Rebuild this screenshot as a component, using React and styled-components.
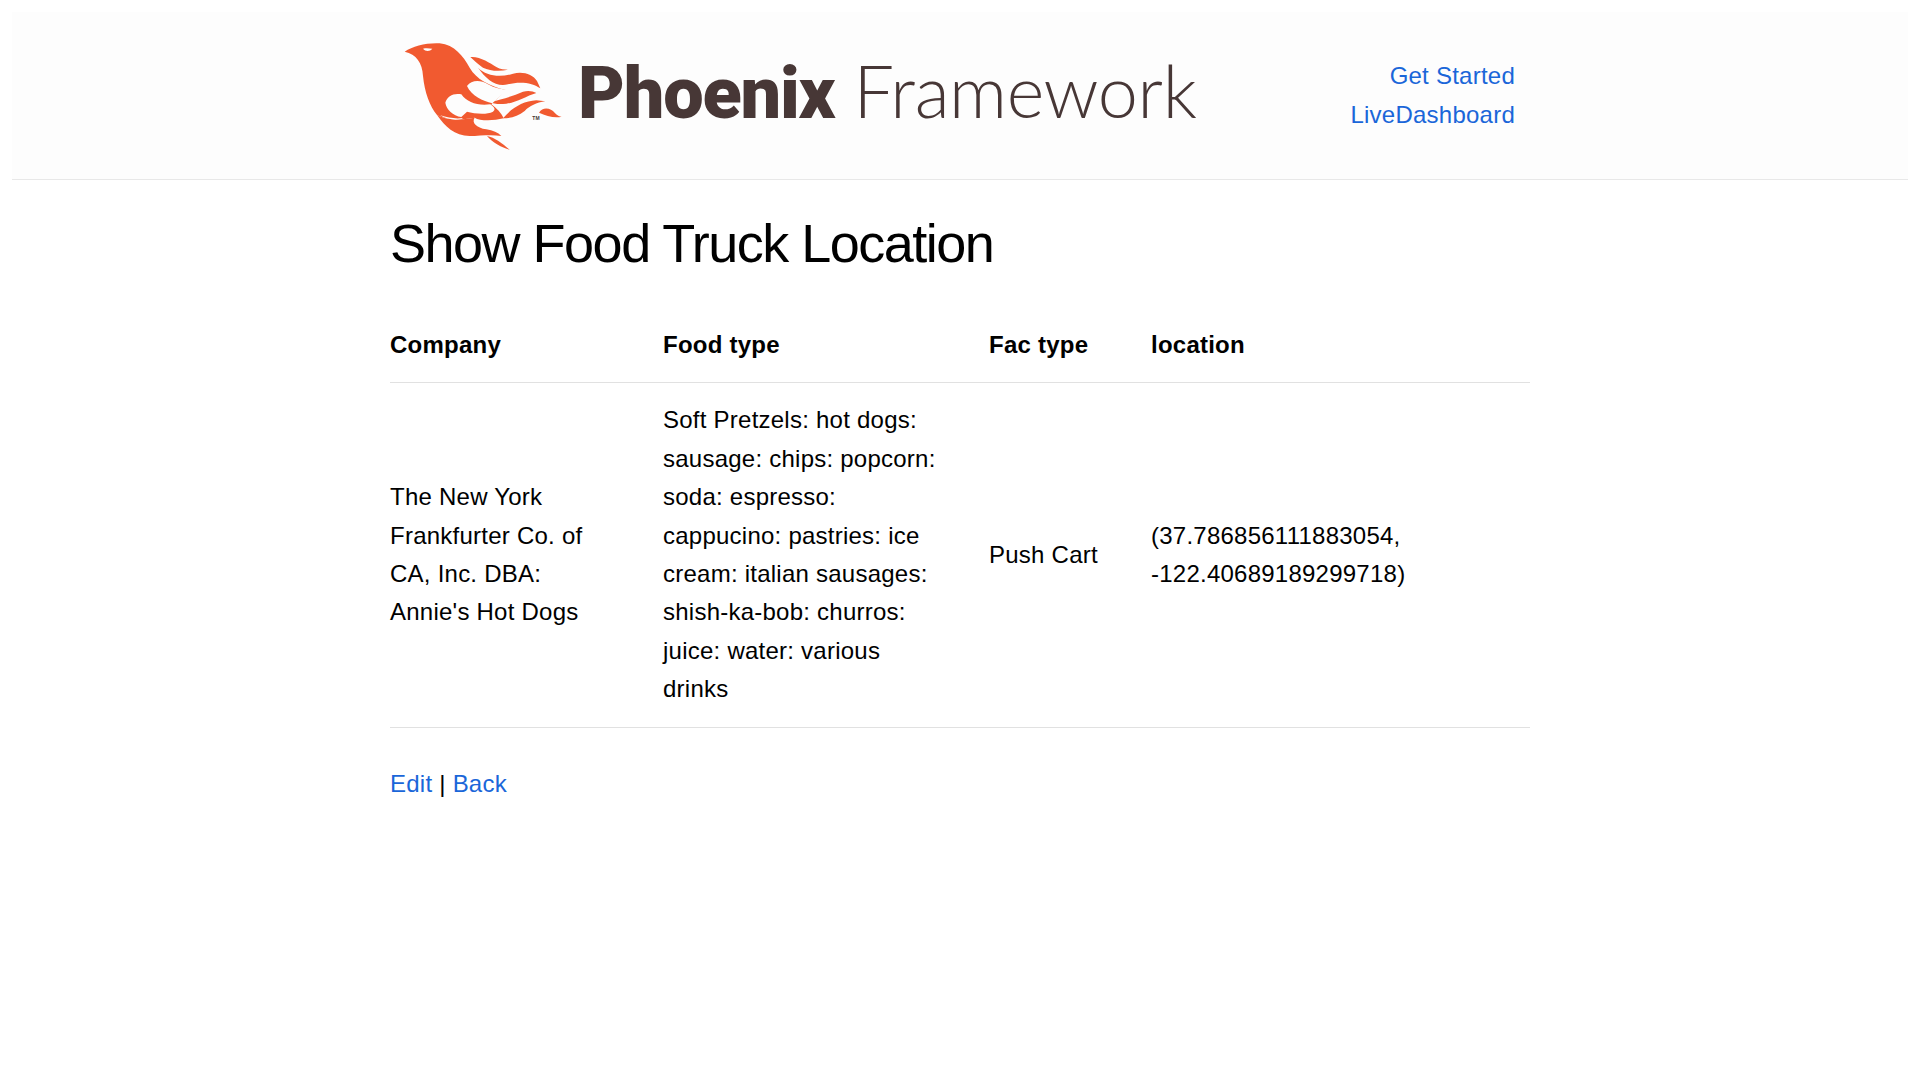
import React from 'react'
import styled, { createGlobalStyle } from 'styled-components'

const GlobalStyle = createGlobalStyle`
  html, body { margin: 0; padding: 0; background: #fff; }
  body {
    font-family: "Liberation Sans", Arial, sans-serif;
    font-size: 24px;
    line-height: 38.4px;
    letter-spacing: 0.24px;
    color: #000;
  }
`

const Page = styled.div`
  padding: 12px 12px 0;
  min-height: 1068px;
  box-sizing: border-box;
`

const Header = styled.header`
  background: #fdfdfd;
  border-bottom: 1px solid #e8e8e8;
  height: 167px;
  display: flex;
  justify-content: center;
`

const HeaderInner = styled.div`
  width: 1140px;
  padding: 0 15px 0 13px;
  box-sizing: border-box;
  display: flex;
  justify-content: space-between;
  align-items: center;
`

const Brand = styled.div`
  display: flex;
  align-items: center;
  gap: 15px;
  color: #473736;
`

const Wordmark = styled.div`
  display: flex;
  align-items: baseline;
  gap: 19px;
  padding-bottom: 8px;
  white-space: nowrap;
  line-height: 1;
  letter-spacing: 0;
`

const WordBold = styled.span`
  font-family: Roboto, sans-serif;
  font-size: 72px;
  font-weight: 900;
  letter-spacing: -1.2px;
`

const WordLight = styled.span`
  font-family: Lato, sans-serif;
  font-size: 72px;
  font-weight: 300;
  letter-spacing: -0.4px;
`

const Nav = styled.nav`
  display: flex;
  flex-direction: column;
  align-items: flex-end;
`

const Link = styled.a`
  color: #1a66d9;
  text-decoration: none;
`

const Main = styled.main`
  width: 1140px;
  margin: 0 auto;
`

const Title = styled.h1`
  margin: 0;
  padding-top: 28px;
  font-size: 54px;
  font-weight: 400;
  line-height: 70px;
  letter-spacing: -1.5px;
`

const Table = styled.table`
  width: 100%;
  margin-top: 30px;
  border-collapse: collapse;
  table-layout: fixed;
`

const HeadCell = styled.th`
  text-align: left;
  font-weight: 700;
  padding: 18px 48px 18px 0;
  border-bottom: 1.5px solid #e1e1e1;
  ${({ $w }) => $w && `width: ${$w}px;`}
`

const Cell = styled.td`
  padding: 18px 48px 18px 0;
  border-bottom: 1.5px solid #e1e1e1;
`

const Footer = styled.div`
  margin-top: 37px;
`

const TradeMark = styled.text`
  font-family: "Liberation Sans", sans-serif;
  font-size: 15px;
  font-weight: 700;
  letter-spacing: 0;
  fill: #473736;
`

const BG = '#fdfdfd'

const PhoenixMark = () => (
  <svg width="160" height="110" viewBox="70 60 480 330">
    <g fill="#f15a30">
      <path d="M75 92 C100 75 140 65 180 67 C225 72 250 105 270 140 C290 175 330 195 378 207 C360 225 345 240 335 250 C350 262 365 275 372 292 C340 300 300 300 285 290 C230 300 195 295 172 282 C150 255 135 215 130 165 C128 125 110 100 75 92 Z" />
      <path d="M272 108 C300 105 330 125 350 138 C362 145 375 146 385 146 C360 152 330 150 310 140 C295 130 282 118 272 108 Z" />
      <path d="M295 140 C320 165 360 170 400 158 C430 150 460 160 472 180 L482 202 C460 185 420 180 385 190 C350 200 320 175 295 140 Z" />
      <path d="M330 243 C370 235 400 225 430 212 C445 208 460 210 470 216 C440 225 410 245 380 248 C360 250 345 250 330 243 Z" />
      <path d="M370 292 C395 262 430 240 470 238 L497 241 C470 245 450 255 435 270 C415 285 395 292 370 292 Z" />
      <path d="M478 275 C490 255 515 262 525 275 C532 284 540 286 546 287 C525 292 500 285 478 275 Z" />
      <path d="M172 282 C195 295 230 300 285 290 C275 305 290 320 320 325 C340 328 355 335 365 345 C335 340 300 345 270 345 C225 345 195 315 172 282 Z" />
      <path d="M322 345 C345 350 365 365 390 386 C365 380 340 365 322 345 Z" />
    </g>
    <g fill={BG}>
      <path d="M262 195 C275 178 300 175 325 190 C345 202 365 205 385 206 C365 222 350 234 338 247 C310 240 275 225 262 195 Z" />
      <path d="M197 245 C203 225 222 215 245 220 C262 245 295 255 332 250 C350 262 345 268 340 272 C320 282 285 278 262 272 L245 288 C220 285 200 265 197 245 Z" />
      <path d="M182 283 C205 291 230 294 250 291 L246 294 C225 299 200 295 182 283 Z" />
      <path d="M130 83 C140 80 150 82 158 83 C150 92 138 92 130 83 Z" />
    </g>
    <TradeMark x="458" y="296">TM</TradeMark>
  </svg>
)

export default function App() {
  return (
    <Page>
      <GlobalStyle />
      <Header>
        <HeaderInner>
          <Brand>
            <PhoenixMark />
            <Wordmark>
              <WordBold>Phoenix</WordBold>
              <WordLight>Framework</WordLight>
            </Wordmark>
          </Brand>
          <Nav>
            <Link href="#">Get Started</Link>
            <Link href="#">LiveDashboard</Link>
          </Nav>
        </HeaderInner>
      </Header>
      <Main>
        <Title>Show Food Truck Location</Title>
        <Table>
          <thead>
            <tr>
              <HeadCell $w={225}>Company</HeadCell>
              <HeadCell $w={278}>Food type</HeadCell>
              <HeadCell $w={114}>Fac type</HeadCell>
              <HeadCell>location</HeadCell>
            </tr>
          </thead>
          <tbody>
            <tr>
              <Cell>The New York Frankfurter Co. of CA, Inc. DBA: Annie's Hot Dogs</Cell>
              <Cell>Soft Pretzels: hot dogs: sausage: chips: popcorn: soda: espresso: cappucino: pastries: ice cream: italian sausages: shish-ka-bob: churros: juice: water: various drinks</Cell>
              <Cell>Push Cart</Cell>
              <Cell>(37.786856111883054, -122.40689189299718)</Cell>
            </tr>
          </tbody>
        </Table>
        <Footer>
          <Link href="#">Edit</Link> | <Link href="#">Back</Link>
        </Footer>
      </Main>
    </Page>
  )
}
